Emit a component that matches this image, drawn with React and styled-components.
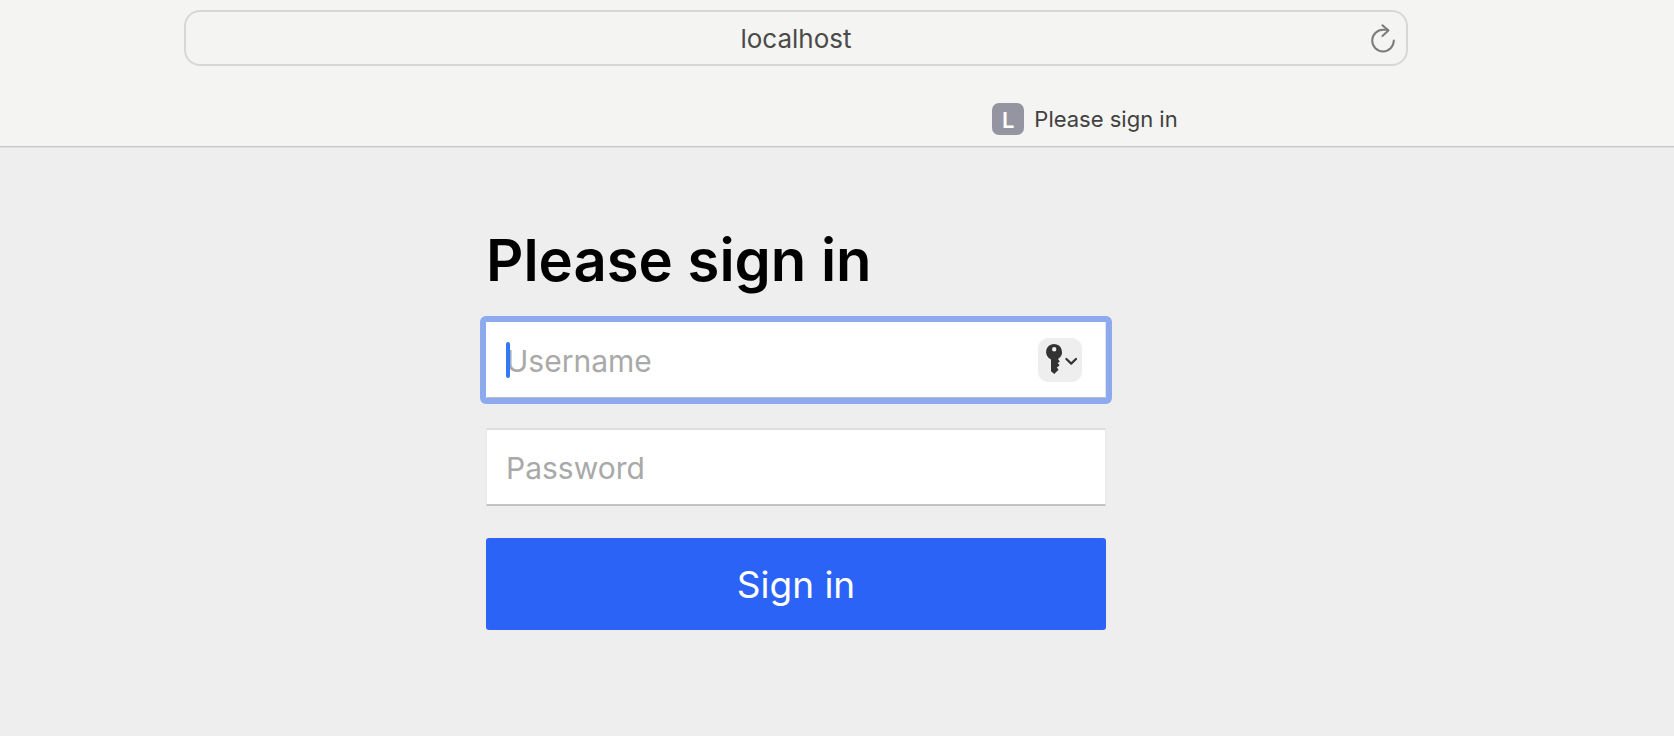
import React from "react";
import styled, { createGlobalStyle } from "styled-components";

const GlobalStyle = createGlobalStyle`
  *, *::before, *::after { box-sizing: border-box; }
  body {
    margin: 0;
    background: #eeeeee;
    color: #000;
    font-family: Inter, "Liberation Sans", sans-serif;
  }
  input, button { font-family: inherit; margin: 0; }
`;

const Page = styled.div`
  min-height: 100vh;
`;

const BrowserChrome = styled.header`
  display: flex;
  flex-direction: column;
  gap: 37px;
  padding: 10px 0 11px;
  background: #f4f4f2;
  border-bottom: 1px solid #c6c6c5;
  box-shadow: 0 1px 0 #e0e0e0;
`;

const Toolbar = styled.div`
  display: flex;
  padding: 0 266px 0 184px;
`;

const AddressBar = styled.div`
  display: flex;
  align-items: center;
  flex: 1;
  min-width: 0;
  height: 56px;
  padding: 0 10px 0 36px;
  border: 2px solid #d7d7d5;
  border-radius: 16px;
`;

const AddressInput = styled.input`
  flex: 1;
  min-width: 0;
  padding: 2px 0 0;
  border: 0;
  outline: 0;
  background: transparent;
  color: #4a4a49;
  font-size: 26px;
  line-height: 32px;
  text-align: center;
`;

const ReloadButton = styled.button`
  display: flex;
  flex: none;
  padding: 0;
  border: 0;
  background: transparent;
  color: #7b7b7a;
`;

const TabBar = styled.nav`
  display: flex;
  justify-content: center;
  padding-left: 496px;
`;

const Tab = styled.a`
  display: flex;
  align-items: center;
  gap: 10px;
  color: #414140;
  font-size: 22px;
  line-height: 32px;
  text-decoration: none;
  white-space: nowrap;
`;

const TabBadge = styled.span`
  width: 32px;
  height: 32px;
  border-radius: 7px;
  background: #9595a2;
  color: #fff;
  font-size: 22px;
  font-weight: 600;
  line-height: 34px;
  text-align: center;
`;

const Main = styled.main`
  display: flex;
  justify-content: center;
  padding: 75px 82px 75px 0;
`;

const SignInForm = styled.form`
  display: flex;
  flex-direction: column;
  width: 100%;
  max-width: 620px;
`;

const Heading = styled.h1`
  margin: 0 0 24px;
  font-size: 58px;
  font-weight: 600;
  line-height: 76px;
  white-space: nowrap;
`;

const Field = styled.div`
  position: relative;
  display: flex;
  height: 78px;
  margin-bottom: 32px;
`;

const FocusedField = styled(Field)`
  height: 76px;
  margin-bottom: 30px;

  &::before {
    content: "";
    position: absolute;
    inset: -6px;
    border-radius: 6px;
    background: #8eaaee;
  }
`;

const TextInput = styled.input`
  position: relative;
  width: 100%;
  padding: 2px 19px 0;
  border: 1px solid #e8e8e8;
  border-top: 2px solid #dedede;
  border-bottom: 2px solid #c3c3c3;
  border-radius: 0;
  outline: 0;
  background: #fff;
  color: #000;
  font-size: 30px;

  &::placeholder {
    color: #a9a9a9;
    opacity: 1;
  }
`;

const FocusedInput = styled(TextInput)`
  border-width: 0 1px 1px;
  border-color: #fff #e4e4e4 #b4b9c6 #fff;
  caret-color: transparent;
`;

const Caret = styled.span`
  position: absolute;
  left: 20px;
  top: 20px;
  width: 4px;
  height: 36px;
  border-radius: 2px;
  background: #3478f6;
`;

const KeyButton = styled.button`
  position: absolute;
  right: 24px;
  top: 16px;
  width: 44px;
  height: 44px;
  padding: 0;
  border: 0;
  border-radius: 10px;
  background: #eeeeee;
  color: #333;

  svg { display: block; }
`;

const SubmitButton = styled.button`
  height: 92px;
  padding: 0;
  border: 0;
  border-radius: 3px;
  background: #2a63f6;
  color: #fff;
  font-size: 37px;
`;

function ReloadIcon() {
  return (
    <svg width="26" height="30" viewBox="0 0 26 30" fill="none" stroke="currentColor" strokeWidth="2" strokeLinecap="round" strokeLinejoin="round" aria-hidden="true">
      <path d="M23.8 17.6A10.8 10.8 0 1 1 13 6.8H18" />
      <path d="M12.4 2.2L18.4 7.6L12.4 13" />
    </svg>
  );
}

function KeyIcon() {
  return (
    <svg width="44" height="44" viewBox="0 0 44 44" aria-hidden="true">
      <path
        fill="currentColor"
        fillRule="evenodd"
        d="M16 6A8 8 0 0 0 13 21.4V33.2L16.2 36L20.6 31.8L18.8 29.6L21.2 27.8V26.6L19.6 25.2L21.8 23.4L20 20.9A8 8 0 0 0 16 6ZM16.2 9A2.2 2.2 0 1 1 16.2 13.4A2.2 2.2 0 1 1 16.2 9Z"
      />
      <path d="M28.4 21L33.2 25.6L38 21" fill="none" stroke="currentColor" strokeWidth="2.2" strokeLinecap="round" strokeLinejoin="round" />
    </svg>
  );
}

export default function App() {
  return (
    <Page>
      <GlobalStyle />
      <BrowserChrome>
        <Toolbar>
          <AddressBar>
            <AddressInput type="text" aria-label="Address" defaultValue="localhost" />
            <ReloadButton type="button" aria-label="Reload page">
              <ReloadIcon />
            </ReloadButton>
          </AddressBar>
        </Toolbar>
        <TabBar aria-label="Tabs">
          <Tab href="#sign-in" aria-current="page">
            <TabBadge aria-hidden="true">L</TabBadge>
            Please sign in
          </Tab>
        </TabBar>
      </BrowserChrome>
      <Main id="sign-in">
        <SignInForm onSubmit={(event) => event.preventDefault()}>
          <Heading>Please sign in</Heading>
          <FocusedField>
            <FocusedInput type="text" name="username" placeholder="Username" aria-label="Username" />
            <Caret aria-hidden="true" />
            <KeyButton type="button" aria-label="Saved passwords">
              <KeyIcon />
            </KeyButton>
          </FocusedField>
          <Field>
            <TextInput type="password" name="password" placeholder="Password" aria-label="Password" />
          </Field>
          <SubmitButton type="submit">Sign in</SubmitButton>
        </SignInForm>
      </Main>
    </Page>
  );
}
